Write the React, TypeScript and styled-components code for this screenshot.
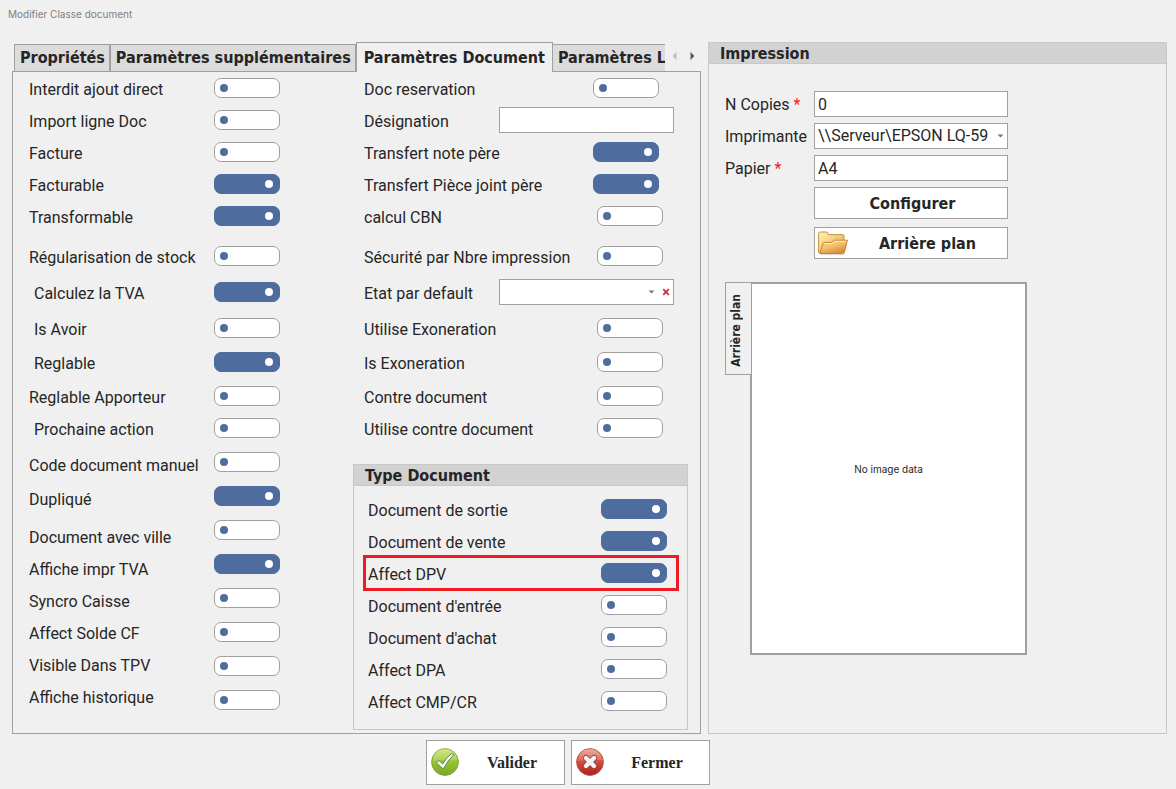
import React from 'react';
import styled, { createGlobalStyle, css } from 'styled-components';

const color = {
  page: '#f0f0f0',
  text: '#262626',
  muted: '#7f7f7f',
  line: '#a0a0a0',
  softLine: '#c8c8c8',
  header: '#d2d2d2',
  tab: '#dcdcdc',
  accent: '#4e6d9e',
  required: '#ff1420',
  highlight: '#ed1c24',
};

const font = {
  body: 'Roboto, "Noto Sans", sans-serif',
  bold: '"DejaVu Sans Condensed", "DejaVu Sans", sans-serif',
  small: 'Inter, "Noto Sans", sans-serif',
  serif: '"Liberation Serif", serif',
};

const GlobalStyle = createGlobalStyle`
  *, *::before, *::after { box-sizing: border-box; }
  body { margin: 0; background: ${color.page}; color: ${color.text}; font: 16px/24px ${font.body}; }
  button, input, select { font: inherit; color: inherit; margin: 0; border-radius: 0; }
`;

const Page = styled.main`
  display: flex;
  flex-direction: column;
  min-height: 100vh;
  padding: 4px 9px 4px 12px;
`;

const Title = styled.h1`
  margin: 0 0 18px -4px;
  font: 400 10px/20px ${font.small};
  color: ${color.muted};
`;

const Columns = styled.div`
  display: grid;
  grid-template-columns: minmax(0, 689fr) minmax(0, 459fr);
  gap: 7px;
`;

const TabArea = styled.section`
  display: flex;
  flex-direction: column;
`;

const TabBar = styled.div`
  position: relative;
  z-index: 1;
  display: flex;
  height: 30px;
  margin-bottom: -1px;
  padding-left: 2px;
`;

const TabList = styled.div`
  display: flex;
  align-items: flex-end;
  flex: 1;
  overflow: hidden;
`;

const Tab = styled.button<{ $active?: boolean }>`
  flex: none;
  height: 28px;
  padding: 0 4px 0 5px;
  border: 1px solid ${color.line};
  background: ${color.tab};
  font: 700 16px/26px ${font.bold};
  white-space: nowrap;

  ${(p) =>
    p.$active &&
    css`
      height: 30px;
      padding: 0 7px;
      border-bottom: 0;
      background: ${color.page};
      line-height: 28px;

      & + button { border-left: 0; }
    `}
`;

const TabScroll = styled.div`
  display: flex;
  width: 36px;
  height: 28px;
`;

const ScrollButton = styled.button`
  display: flex;
  align-items: center;
  justify-content: center;
  width: 18px;
  padding: 0;
  border: 0;
  background: none;
`;

const TabPanel = styled.div`
  display: grid;
  grid-template-columns: 185px minmax(66px, 1fr) 335px;
  flex: 1;
  padding: 3px 12px 3px 16px;
  border: 1px solid ${color.line};
`;

const Stack = styled.div<{ $inset?: boolean }>`
  display: flex;
  flex-direction: column;
  ${(p) => p.$inset && 'padding: 0 14px 0 11px;'}
`;

const Label = styled.label`
  padding-top: 2px;
  white-space: nowrap;
`;

const Line = styled.div<{ $gap?: number; $indent?: boolean; $marked?: boolean }>`
  display: flex;
  align-items: center;
  justify-content: space-between;
  height: 26px;
  margin-top: ${(p) => p.$gap ?? 0}px;
  padding-left: ${(p) => (p.$indent ? 5 : 0)}px;

  ${Label} { padding-top: 4px; }

  ${(p) =>
    p.$marked &&
    css`
      position: relative;

      &::after {
        content: '';
        position: absolute;
        inset: -5px -12px -5px -5px;
        border: 3px solid ${color.highlight};
        pointer-events: none;
      }
    `}
`;

const Required = styled.span`
  color: ${color.required};
`;

const Toggle = styled.input.attrs({ type: 'checkbox', role: 'switch' })<{ $end?: number }>`
  appearance: none;
  display: flex;
  align-items: center;
  flex: none;
  width: 66px;
  height: 20px;
  margin-right: ${(p) => p.$end ?? 0}px;
  padding: 0 5px;
  border: 1px solid ${color.line};
  border-radius: 7px;
  background: #fff;

  &::before {
    content: '';
    width: 8px;
    height: 8px;
    border-radius: 50%;
    background: ${color.accent};
  }

  &:checked {
    justify-content: flex-end;
    padding: 0 6px;
    border-color: ${color.accent};
    background: ${color.accent};
  }

  &:checked::before { background: #fff; }
`;

const TextBox = styled.input<{ $width?: number }>`
  width: ${(p) => (p.$width ? `${p.$width}px` : '100%')};
  height: 26px;
  padding: 0 3px;
  border: 1px solid ${color.line};
  background: #fff;
`;

const SelectBox = styled.div<{ $width?: number }>`
  position: relative;
  width: ${(p) => (p.$width ? `${p.$width}px` : '100%')};
  height: 26px;
`;

const Select = styled.select`
  appearance: none;
  width: 100%;
  height: 26px;
  padding: 0 16px 0 3px;
  border: 1px solid ${color.line};
  background: #fff;
`;

const SelectTools = styled.div`
  position: absolute;
  top: 0;
  right: 4px;
  display: flex;
  align-items: center;
  gap: 7px;
  height: 26px;
  pointer-events: none;
`;

const ClearButton = styled.button`
  display: flex;
  padding: 0;
  border: 0;
  background: none;
  pointer-events: auto;
`;

const Group = styled.section<{ $spaced?: boolean }>`
  margin-top: ${(p) => (p.$spaced ? 23 : 0)}px;
  border: 1px solid ${color.softLine};
`;

const GroupTitle = styled.h2`
  margin: 0;
  padding: 2px 0 0 11px;
  border-bottom: 1px solid ${color.softLine};
  background: ${color.header};
  font: 700 16px/18px ${font.bold};
`;

const TypeRows = styled.div`
  padding: 10px 20px 15px 14px;
`;

const PrintForm = styled.div`
  display: grid;
  grid-template-columns: 89px 194px;
  row-gap: 6px;
  padding: 27px 16px 0;
`;

const PrintActions = styled.div`
  grid-column: 2;
  display: flex;
  flex-direction: column;
  gap: 8px;
`;

const Button = styled.button<{ $serif?: boolean }>`
  display: flex;
  align-items: center;
  width: ${(p) => (p.$serif ? '139px' : '100%')};
  height: ${(p) => (p.$serif ? 45 : 32)}px;
  padding: ${(p) => (p.$serif ? '0 0 2px 3px' : '0 0 0 3px')};
  border: 1px solid ${color.line};
  background: #fff;
  font: 700 16px/24px ${(p) => (p.$serif ? font.serif : font.bold)};
`;

const ButtonText = styled.span`
  flex: 1;
  padding-top: 2px;
  text-align: center;
`;

const Preview = styled.div`
  display: flex;
  align-items: flex-start;
  padding: 23px 16px 0;
`;

const SideTab = styled.button`
  position: relative;
  z-index: 1;
  display: flex;
  align-items: center;
  justify-content: center;
  width: 26px;
  height: 93px;
  margin-right: -1px;
  padding: 4px 5px 0 0;
  border: 1px solid ${color.line};
  border-right: 0;
  background: ${color.page};
  font: 700 12px/16px ${font.bold};
`;

const SideTabText = styled.span`
  writing-mode: vertical-rl;
  rotate: 180deg;
`;

const ImageBox = styled.div`
  display: flex;
  align-items: center;
  justify-content: center;
  width: 277px;
  height: 373px;
  border: 2px solid ${color.line};
  background: #fff;
  font: 10px/16px ${font.small};
`;

const Footer = styled.footer`
  display: flex;
  justify-content: center;
  gap: 6px;
  padding: 6px 43px 0 0;
`;

const Caret = () => (
  <svg width="7" height="4" viewBox="0 0 7 4" aria-hidden="true">
    <path d="M0.5 0.5h6L3.5 3.6z" fill="#777" />
  </svg>
);

const ClearIcon = () => (
  <svg width="8" height="8" viewBox="0 0 8 8" aria-hidden="true">
    <path d="M1.2 1.2l5.6 5.6M6.8 1.2L1.2 6.8" stroke="#cf2a3f" strokeWidth="1.7" />
  </svg>
);

const Arrow = ({ flip }: { flip?: boolean }) => (
  <svg width="5" height="8" viewBox="0 0 5 8" aria-hidden="true">
    <path d={flip ? 'M4.5 0v8L0.5 4z' : 'M0.5 0v8l4-4z'} fill={flip ? '#bdbdbd' : '#5c5c5c'} />
  </svg>
);

const FolderIcon = () => (
  <svg width="30" height="26" viewBox="0 0 30 26" aria-hidden="true">
    <defs>
      <linearGradient id="folderBack" x1="0" y1="0" x2="1" y2="1">
        <stop offset="0" stopColor="#fff3ae" />
        <stop offset="1" stopColor="#e2a649" />
      </linearGradient>
      <linearGradient id="folderFront" x1="0" y1="0" x2="0.6" y2="1">
        <stop offset="0" stopColor="#fde6a6" />
        <stop offset="0.55" stopColor="#f0bd69" />
        <stop offset="1" stopColor="#d98a35" />
      </linearGradient>
    </defs>
    <path d="M3 24.4h24" stroke="#000" strokeOpacity="0.12" strokeWidth="1.4" />
    <path d="M0.600 22.600V3.600Q0.600 2 2.200 2H8.400Q9.400 2 9.800 3L10.400 4.600H24.500Q26 4.600 26 6.200V22L3 23.600Z" fill="url(#folderBack)" stroke="#c8933c" />
    <path d="M1.8 23.5L5 13.400Q5.400 12.400 6.400 12.400H13.600L16.600 10.200H29.4L26.400 22.2Q26 23.6 24.6 23.6Z" fill="url(#folderFront)" stroke="#c07c2a" strokeWidth="0.900" />
    <path d="M6.600 13.500h7.400l3-2.200h11" fill="none" stroke="#fff7d8" strokeOpacity="0.8" />
  </svg>
);

const CheckIcon = () => (
  <svg width="30" height="30" viewBox="0 0 30 30" aria-hidden="true">
    <defs>
      <linearGradient id="okFill" x1="0" y1="0" x2="0" y2="1">
        <stop offset="0" stopColor="#cde56c" />
        <stop offset="0.5" stopColor="#95c431" />
        <stop offset="1" stopColor="#78a828" />
      </linearGradient>
    </defs>
    <circle cx="15" cy="15" r="13.4" fill="url(#okFill)" stroke="#86a83f" />
    <path d="M3 14a12 12 0 0 1 24-1q-12-1-24 1z" fill="#fff" fillOpacity="0.16" />
    <path d="M6.400 16l2.600-2.600 3.800 3.600Q16 10.600 21.400 6.600l2.600 1Q17.600 13.400 13.400 22Z" fill="#f5f8fc" stroke="#5f7d3c" strokeWidth="0.900" strokeLinejoin="round" />
  </svg>
);

const CrossIcon = () => (
  <svg width="30" height="30" viewBox="0 0 30 30" aria-hidden="true">
    <defs>
      <linearGradient id="noFill" x1="0" y1="0" x2="0" y2="1">
        <stop offset="0" stopColor="#eda392" />
        <stop offset="0.45" stopColor="#d4523f" />
        <stop offset="1" stopColor="#b11d18" />
      </linearGradient>
    </defs>
    <circle cx="15" cy="15" r="13.4" fill="url(#noFill)" stroke="#b95a50" />
    <path d="M3 14a12 12 0 0 1 24-1q-12-1-24 1z" fill="#fff" fillOpacity="0.14" />
    <path d="M11 11l8 8M19 11l-8 8" stroke="#9a3a36" strokeWidth="6" strokeLinecap="round" />
    <path d="M11 11l8 8M19 11l-8 8" stroke="#eff2f8" strokeWidth="4.4" strokeLinecap="round" />
  </svg>
);

type Option = {
  id: string;
  text: string;
  on?: boolean;
  indent?: boolean;
  labelGap: number;
  toggleGap: number;
};

const option = (id: string, text: string, labelGap: number, toggleGap: number, on = false, indent = false): Option => ({
  id, text, labelGap, toggleGap, on, indent,
});

const mainOptions: Option[] = [
  option('interdit', 'Interdit ajout direct', 0, 0),
  option('import', 'Import ligne Doc', 6, 6),
  option('facture', 'Facture', 6, 6),
  option('facturable', 'Facturable', 6, 6, true),
  option('transformable', 'Transformable', 6, 6, true),
  option('regularisation', 'Régularisation de stock', 14, 14),
  option('tva', 'Calculez la TVA', 10, 10, true, true),
  option('avoir', 'Is Avoir', 10, 10, false, true),
  option('reglable', 'Reglable', 8, 8, true, true),
  option('apporteur', 'Reglable Apporteur', 8, 8),
  option('prochaine', 'Prochaine action', 6, 6, false, true),
  option('manuel', 'Code document manuel', 10, 8),
  option('duplique', 'Dupliqué', 8, 8, true),
  option('ville', 'Document avec ville', 12, 8),
  option('impr', 'Affiche impr TVA', 6, 8, true),
  option('syncro', 'Syncro Caisse', 6, 8),
  option('solde', 'Affect Solde CF', 6, 8),
  option('visible', 'Visible Dans TPV', 6, 8),
  option('historique', 'Affiche historique', 6, 8),
];

type Field = { id: string; text: string; gap: number; on?: boolean; end?: number; kind?: 'text' | 'select' };

const documentFields: Field[] = [
  { id: 'reservation', text: 'Doc reservation', gap: 0, end: 15 },
  { id: 'designation', text: 'Désignation', gap: 6, kind: 'text' },
  { id: 'note', text: 'Transfert note père', gap: 6, on: true, end: 15 },
  { id: 'piece', text: 'Transfert Pièce joint père', gap: 6, on: true, end: 15 },
  { id: 'cbn', text: 'calcul CBN', gap: 6, end: 11 },
  { id: 'securite', text: 'Sécurité par Nbre impression', gap: 14, end: 11 },
  { id: 'etat', text: 'Etat par default', gap: 10, kind: 'select' },
  { id: 'utilise', text: 'Utilise Exoneration', gap: 10, end: 11 },
  { id: 'exoneration', text: 'Is Exoneration', gap: 8, end: 11 },
  { id: 'contre', text: 'Contre document', gap: 8, end: 11 },
  { id: 'utiliseContre', text: 'Utilise contre document', gap: 6, end: 11 },
];

const typeFields = [
  { id: 'sortie', text: 'Document de sortie', on: true },
  { id: 'vente', text: 'Document de vente', on: true },
  { id: 'dpv', text: 'Affect DPV', on: true, marked: true },
  { id: 'entree', text: "Document d'entrée" },
  { id: 'achat', text: "Document d'achat" },
  { id: 'dpa', text: 'Affect DPA' },
  { id: 'cmp', text: 'Affect CMP/CR' },
];

function FieldControl({ field }: { field: Field }) {
  if (field.kind === 'text') return <TextBox id={field.id} type="text" $width={175} />;
  if (field.kind === 'select') {
    return (
      <SelectBox $width={175}>
        <Select id={field.id} defaultValue="">
          <option value="" />
        </Select>
        <SelectTools>
          <Caret />
          <ClearButton type="button" aria-label="Effacer">
            <ClearIcon />
          </ClearButton>
        </SelectTools>
      </SelectBox>
    );
  }
  return <Toggle id={field.id} defaultChecked={field.on} $end={field.end} />;
}

export default function App() {
  return (
    <Page>
      <GlobalStyle />
      <Title>Modifier Classe document</Title>
      <Columns>
        <TabArea>
          <TabBar>
            <TabList role="tablist">
              <Tab type="button" role="tab">Propriétés</Tab>
              <Tab type="button" role="tab">Paramètres supplémentaires</Tab>
              <Tab type="button" role="tab" aria-selected="true" $active>Paramètres Document</Tab>
              <Tab type="button" role="tab">Paramètres L</Tab>
            </TabList>
            <TabScroll>
              <ScrollButton type="button" aria-label="Précédent" disabled><Arrow flip /></ScrollButton>
              <ScrollButton type="button" aria-label="Suivant"><Arrow /></ScrollButton>
            </TabScroll>
          </TabBar>
          <TabPanel role="tabpanel">
            <Stack>
              {mainOptions.map((o) => (
                <Line key={o.id} $gap={o.labelGap} $indent={o.indent}>
                  <Label htmlFor={o.id}>{o.text}</Label>
                </Line>
              ))}
            </Stack>
            <Stack>
              {mainOptions.map((o) => (
                <Line key={o.id} $gap={o.toggleGap}>
                  <Toggle id={o.id} defaultChecked={o.on} />
                </Line>
              ))}
            </Stack>
            <div>
              <Stack $inset>
                {documentFields.map((f) => (
                  <Line key={f.id} $gap={f.gap}>
                    <Label htmlFor={f.id}>{f.text}</Label>
                    <FieldControl field={f} />
                  </Line>
                ))}
              </Stack>
              <Group $spaced>
                <GroupTitle>Type Document</GroupTitle>
                <TypeRows>
                  {typeFields.map((f, i) => (
                    <Line key={f.id} $gap={i ? 6 : 0} $marked={f.marked}>
                      <Label htmlFor={f.id}>{f.text}</Label>
                      <Toggle id={f.id} defaultChecked={f.on} />
                    </Line>
                  ))}
                </TypeRows>
              </Group>
            </div>
          </TabPanel>
        </TabArea>

        <Group>
          <GroupTitle>Impression</GroupTitle>
          <PrintForm>
            <Label htmlFor="copies">N Copies <Required>*</Required></Label>
            <TextBox id="copies" type="text" defaultValue="0" />
            <Label htmlFor="imprimante">Imprimante</Label>
            <SelectBox>
              <Select id="imprimante">
                <option>{'\\\\Serveur\\EPSON LQ-59'}</option>
              </Select>
              <SelectTools><Caret /></SelectTools>
            </SelectBox>
            <Label htmlFor="papier">Papier <Required>*</Required></Label>
            <TextBox id="papier" type="text" defaultValue="A4" />
            <PrintActions>
              <Button type="button"><ButtonText>Configurer</ButtonText></Button>
              <Button type="button"><FolderIcon /><ButtonText>Arrière plan</ButtonText></Button>
            </PrintActions>
          </PrintForm>
          <Preview>
            <SideTab type="button"><SideTabText>Arrière plan</SideTabText></SideTab>
            <ImageBox>No image data</ImageBox>
          </Preview>
        </Group>
      </Columns>
      <Footer>
        <Button type="button" $serif><CheckIcon /><ButtonText>Valider</ButtonText></Button>
        <Button type="button" $serif><CrossIcon /><ButtonText>Fermer</ButtonText></Button>
      </Footer>
    </Page>
  );
}
